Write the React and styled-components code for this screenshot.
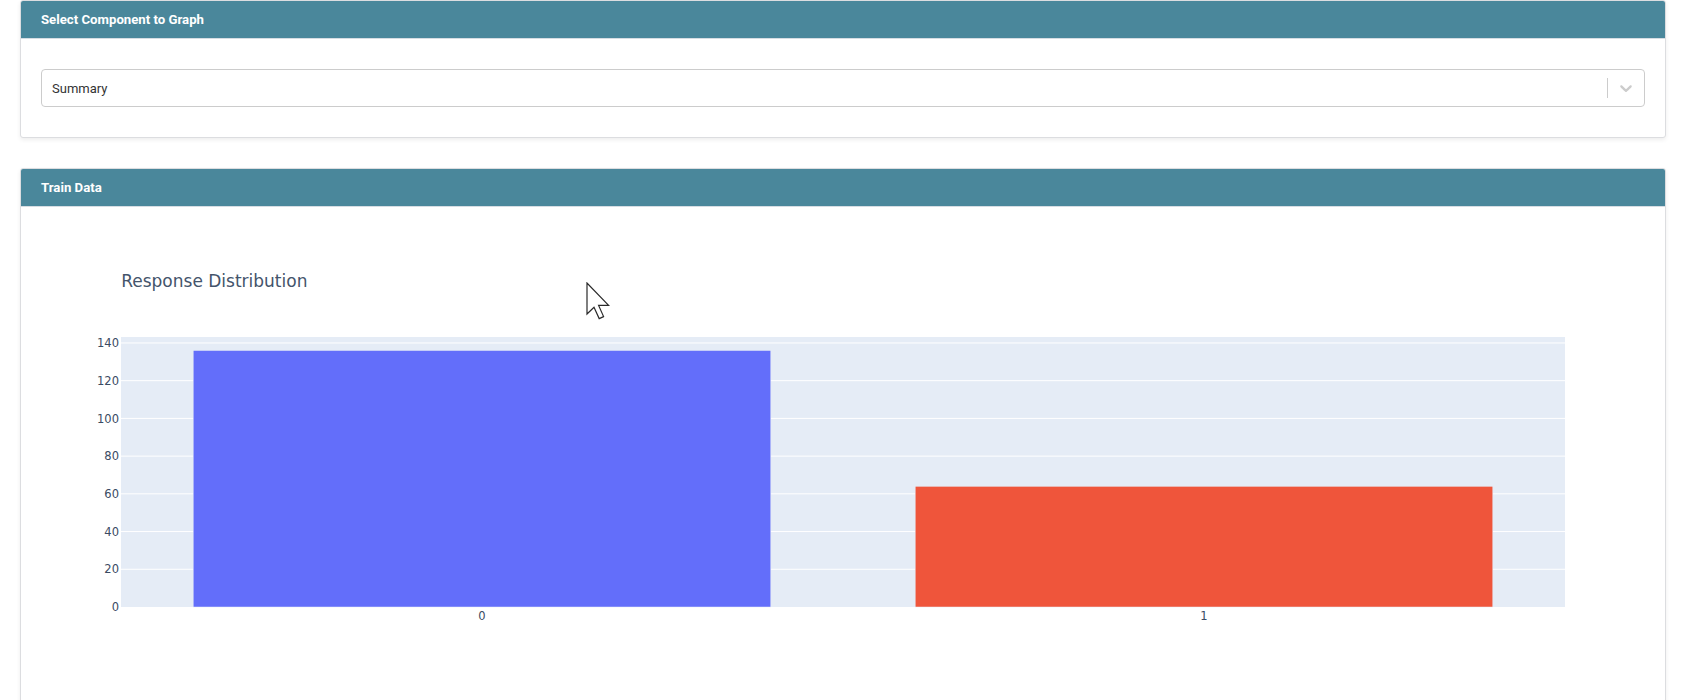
import React from "react";
import styled, { createGlobalStyle } from "styled-components";

const GlobalStyle = createGlobalStyle`
  html, body {
    margin: 0;
    padding: 0;
    background: #ffffff;
  }
  body {
    font-family: "Roboto", "Liberation Sans", Arial, sans-serif;
    color: #333333;
  }
`;

const CHART = {
  width: 1604,
  height: 450,
  margin: { l: 80, r: 80, t: 100, b: 80 },
  yMax: 143.16,
  ticks: [0, 20, 40, 60, 80, 100, 120, 140],
  bars: [
    { label: "0", value: 136, color: "#636efa" },
    { label: "1", value: 64, color: "#EF553B" },
  ],
};

const INK = "#3a4b63";

function ResponseChart() {
  const { width, height, margin, yMax, ticks, bars } = CHART;
  const pw = width - margin.l - margin.r;
  const ph = height - margin.t - margin.b;
  const band = pw / bars.length;
  const barW = band * 0.8;
  const y = (v) => margin.t + ph - (v / yMax) * ph;

  return (
    <ChartSvg width={width} height={height} viewBox={`0 0 ${width} ${height}`}>
      <rect x={margin.l} y={margin.t} width={pw} height={ph} fill="#E5ECF6" />
      {ticks.map((t) => (
        <g key={t}>
          {t > 0 && (
            <line
              x1={margin.l}
              x2={margin.l + pw}
              y1={y(t)}
              y2={y(t)}
              stroke="#ffffff"
              strokeWidth="1"
            />
          )}
          <text
            x={margin.l - 2}
            y={y(t) + 4.2}
            textAnchor="end"
            fontSize="11.5"
            fill={INK}
          >
            {t}
          </text>
        </g>
      ))}
      {bars.map((b, i) => {
        const cx = margin.l + band * i + band / 2;
        return (
          <g key={b.label}>
            <rect
              x={cx - barW / 2}
              y={y(b.value)}
              width={barW}
              height={margin.t + ph - y(b.value)}
              fill={b.color}
              stroke="#E5ECF6"
              strokeWidth="0.5"
            />
            <text
              x={cx}
              y={margin.t + ph + 13}
              textAnchor="middle"
              fontSize="11.5"
              fill={INK}
            >
              {b.label}
            </text>
          </g>
        );
      })}
      <text x={width * 0.05} y={50} fontSize="17" fill="#44546b">
        Response Distribution
      </text>
    </ChartSvg>
  );
}

function Cursor() {
  return (
    <CursorSvg width="26" height="38" viewBox="0 0 13 19">
      <path
        d="M0.5 0.5 L0.5 16 L4 12.6 L6.6 18.3 L8.8 17.3 L6.3 11.7 L11.3 11.7 Z"
        fill="#ffffff"
        stroke="#2a2a2a"
        strokeWidth="0.6"
        strokeLinejoin="miter"
      />
    </CursorSvg>
  );
}

export default function App() {
  return (
    <Page>
      <GlobalStyle />
      <Card>
        <CardHeader>Select Component to Graph</CardHeader>
        <CardBody>
          <Select>
            <SelectValue>Summary</SelectValue>
            <Indicators>
              <Separator />
              <Chevron viewBox="0 0 20 20" width="20" height="20">
                <path
                  d="M4.516 7.548c0.436-0.446 1.043-0.481 1.576 0l3.908 3.747 3.908-3.747c0.533-0.481 1.141-0.446 1.574 0 0.436 0.445 0.408 1.197 0 1.615-0.406 0.418-4.695 4.502-4.695 4.502-0.217 0.223-0.502 0.335-0.787 0.335s-0.57-0.112-0.789-0.335c0 0-4.287-4.084-4.695-4.502s-0.436-1.170 0-1.615z"
                  fill="#cccccc"
                />
              </Chevron>
            </Indicators>
          </Select>
        </CardBody>
      </Card>
      <Card>
        <CardHeader>Train Data</CardHeader>
        <CardBody>
          <GraphWrap>
            <ResponseChart />
            <Cursor />
          </GraphWrap>
        </CardBody>
      </Card>
    </Page>
  );
}

const Page = styled.div`
  padding: 0 20px;
  display: flex;
  flex-direction: column;
  gap: 30px;
`;

const Card = styled.div`
  background: #ffffff;
  border: 1px solid #dcdde0;
  border-radius: 3px;
  box-shadow: 0 2px 4px rgba(0, 0, 0, 0.07);
  overflow: hidden;
`;

const CardHeader = styled.div`
  height: 37px;
  display: flex;
  align-items: center;
  padding: 0 20px;
  background: #4a879b;
  border-bottom: 1px solid #d6dde3;
  color: #ffffff;
  font-family: "Roboto", "Liberation Sans", Arial, sans-serif;
  font-weight: 700;
  font-size: 13.2px;
`;

const CardBody = styled.div`
  padding: 30px 20px;
`;

const Select = styled.div`
  height: 38px;
  box-sizing: border-box;
  border: 1px solid #cccccc;
  border-radius: 4px;
  display: flex;
  align-items: center;
  background: #ffffff;
`;

const SelectValue = styled.div`
  flex: 1;
  padding-left: 10px;
  font-family: "Roboto", "Liberation Sans", Arial, sans-serif;
  font-size: 13px;
  color: #333333;
`;

const Indicators = styled.div`
  display: flex;
  align-items: center;
  align-self: stretch;
`;

const Separator = styled.span`
  width: 1px;
  height: 20px;
  background: #cccccc;
`;

const Chevron = styled.svg`
  display: block;
  padding: 8px;
`;

const GraphWrap = styled.div`
  position: relative;
  height: 450px;
`;

const ChartSvg = styled.svg`
  display: block;
  font-family: "DejaVu Sans", Verdana, sans-serif;
`;

const CursorSvg = styled.svg`
  position: absolute;
  left: 545px;
  top: 45px;
`;
